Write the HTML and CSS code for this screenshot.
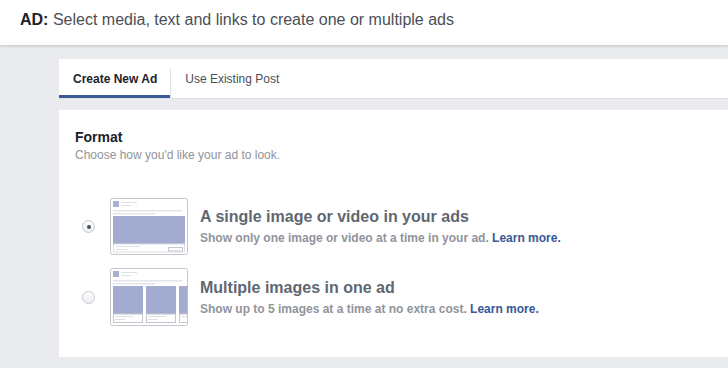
FILE: index.html
```html
<!DOCTYPE html>
<html>
<head>
    <title>Create Ad</title>
    <link rel="stylesheet" href="styles.css">
</head>
<body>

    <!-- Page header -->
    <div class="page-header">
        <b>AD:</b> Select media, text and links to create one or multiple ads
    </div>

    <div class="content">
        <!-- Tabs -->
        <div class="tabs">
            <a class="tab active" href="#">Create New Ad</a>
            <a class="tab" href="#">Use Existing Post</a>
        </div>

        <!-- Format picker -->
        <div class="card">
            <h2>Format</h2>
            <p class="hint">Choose how you'd like your ad to look.</p>

            <label class="option">
                <span class="radio checked"></span>
                <svg class="thumb" width="78" height="57" viewBox="0 0 78 57">
                    <rect x="0.5" y="0.5" width="77" height="56" rx="2" fill="#fff" stroke="#c4c8ce"/>
                    <rect x="3" y="3" width="6" height="6" fill="#a9b1d0"/>
                    <rect x="11" y="4" width="16" height="1" fill="#dcdfe3"/>
                    <rect x="11" y="7" width="10" height="1" fill="#dcdfe3"/>
                    <rect x="3" y="12" width="69" height="1.5" fill="#e3e5e8"/>
                    <rect x="3" y="15" width="42" height="1.5" fill="#e3e5e8"/>
                    <rect x="3" y="18" width="72" height="28" fill="#a3acd0"/>
                    <rect x="3.5" y="46" width="71" height="8" fill="#fff" stroke="#dadde1"/>
                    <rect x="6" y="48" width="24" height="1" fill="#dcdfe3"/>
                    <rect x="6" y="51" width="12" height="1" fill="#dcdfe3"/>
                    <rect x="58.5" y="49.5" width="14" height="3.5" fill="#fff" stroke="#c4c8ce"/>
                </svg>
                <span class="option-text">
                    <span class="option-title">A single image or video in your ads</span>
                    <span class="option-desc">Show only one image or video at a time in your ad. <a href="#">Learn more.</a></span>
                </span>
            </label>

            <label class="option">
                <span class="radio"></span>
                <svg class="thumb" width="78" height="58" viewBox="0 0 78 58">
                    <rect x="0.5" y="0.5" width="77" height="57" rx="2" fill="#fff" stroke="#c4c8ce"/>
                    <rect x="3" y="3" width="6" height="6" fill="#a9b1d0"/>
                    <rect x="11" y="4" width="16" height="1" fill="#dcdfe3"/>
                    <rect x="11" y="7" width="10" height="1" fill="#dcdfe3"/>
                    <rect x="3" y="12" width="69" height="1.5" fill="#e3e5e8"/>
                    <rect x="3" y="15" width="42" height="1.5" fill="#e3e5e8"/>
                    <rect x="3" y="18" width="30" height="28" fill="#a3acd0"/>
                    <rect x="3.5" y="46" width="29" height="8.5" fill="#fff" stroke="#c4c8ce"/>
                    <rect x="5" y="48" width="18" height="1" fill="#dcdfe3"/>
                    <rect x="5" y="51" width="10" height="1" fill="#dcdfe3"/>
                    <rect x="36" y="18" width="30" height="28" fill="#a3acd0"/>
                    <rect x="36.5" y="46" width="29" height="8.5" fill="#fff" stroke="#c4c8ce"/>
                    <rect x="38" y="48" width="18" height="1" fill="#dcdfe3"/>
                    <rect x="38" y="51" width="10" height="1" fill="#dcdfe3"/>
                    <rect x="69" y="18" width="8.5" height="28" fill="#a3acd0"/>
                    <rect x="69.5" y="46" width="8" height="8.5" fill="#fff" stroke="#c4c8ce"/>
                    <rect x="71" y="48" width="6" height="1" fill="#dcdfe3"/>
                </svg>
                <span class="option-text">
                    <span class="option-title">Multiple images in one ad</span>
                    <span class="option-desc">Show up to 5 images at a time at no extra cost. <a href="#">Learn more.</a></span>
                </span>
            </label>
        </div>
    </div>

</body>
</html>
```

FILE: styles.css
```css
/* General Styling */
body {
    margin: 0;
    font-family: 'Liberation Sans', Arial, Helvetica, sans-serif;
    background-color: #e9ebee;
    color: #1d2129;
    overflow: hidden;
}

.page-header {
    height: 46px;
    box-sizing: border-box;
    padding: 11px 20px 0;
    background: #fff;
    border-bottom: 1px solid #cfd2d6;
    box-shadow: 0 1px 2px rgba(0, 0, 0, 0.1);
    font-size: 16px;
    color: #4b4f56;
}

.page-header b {
    color: #1d2129;
}

.content {
    margin: 13px 0 0 59px;
    width: 700px;
}

/* Tabs */
.tabs {
    display: flex;
    height: 40px;
    background: #fff;
    border-bottom: 1px solid #dddfe2;
    box-sizing: border-box;
}

.tab {
    display: flex;
    align-items: center;
    padding: 0 13px 0 14px;
    font-size: 12px;
    color: #4b4f56;
    text-decoration: none;
    white-space: nowrap;
    position: relative;
}

.tab.active {
    font-weight: bold;
    color: #1d2129;
    border-bottom: 3px solid #3b5998;
    padding: 3px 14px 0 14px;
}

.tab.active::after {
    content: "";
    position: absolute;
    right: 0;
    top: 9px;
    bottom: -3px;
    border-right: 1px solid #dddfe2;
}

/* Card */
.card {
    margin-top: 11px;
    height: 247px;
    background: #fff;
    padding: 19px 16px 0;
    box-sizing: border-box;
}

.card h2 {
    margin: 0;
    font-size: 14px;
    font-weight: bold;
    color: #1d2129;
}

.hint {
    margin: 3px 0 0;
    font-size: 12px;
    color: #90949c;
}

.option {
    display: flex;
    align-items: center;
    margin-top: 36px;
    cursor: pointer;
}

.option + .option {
    margin-top: 13px;
}

.radio {
    width: 11px;
    height: 11px;
    border: 1px solid #c4c8ce;
    border-radius: 50%;
    background: linear-gradient(#fff, #ebedf0);
    margin: 0 15px 0 7px;
    display: flex;
    align-items: center;
    justify-content: center;
}

.radio.checked::after {
    content: "";
    width: 4px;
    height: 4px;
    border-radius: 50%;
    background: #4b4f56;
}

.thumb {
    display: block;
}

.option-text {
    display: flex;
    flex-direction: column;
    margin-left: 12px;
}

.option-title {
    font-size: 16px;
    font-weight: bold;
    color: #606770;
}

.option-desc {
    margin-top: 5px;
    font-size: 12px;
    font-weight: bold;
    color: #90949c;
}

.option-desc a {
    color: #365899;
    text-decoration: none;
}
```
